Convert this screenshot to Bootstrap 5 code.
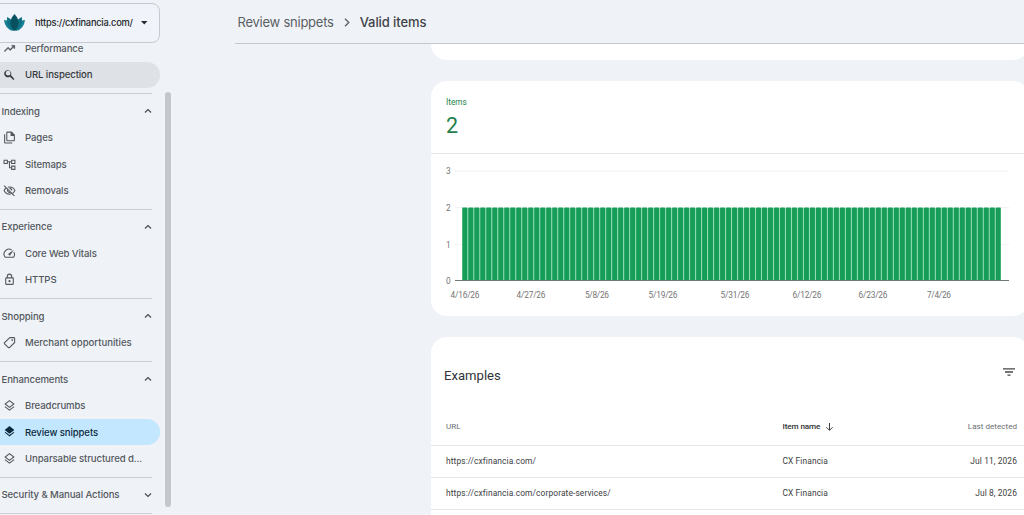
<!DOCTYPE html>
<html lang="en">
<head>
<meta charset="utf-8">
<title>Review snippets - Valid items</title>
<link href="https://cdn.jsdelivr.net/npm/bootstrap@5.3.0/dist/css/bootstrap.min.css" rel="stylesheet">
<style>
html,body{height:515px;overflow:hidden}
body{background:#eff3f8;font-family:Roboto,"Liberation Sans",sans-serif;font-size:8.2px;line-height:1;color:#3c4043}
svg{display:block;flex:none}
.gsans{font-family:Inter,"Liberation Sans",sans-serif}
.side{width:171px;height:515px;position:relative}
.picker{position:absolute;left:-8px;top:3px;width:168px;height:40px;border:1px solid #c6c9cf;border-radius:8px;background:#f0f3f9;font-size:9.3px;letter-spacing:-.25px;font-weight:500;color:#25282c;padding-left:11px;z-index:2}
.ptext{margin-left:10px;width:99px;white-space:nowrap}
.menu{padding-top:35px;width:160px;font-size:9.6px;letter-spacing:-.11px;font-weight:500;color:#54585d}
.item{height:26.5px;padding-left:2.5px;gap:9.5px;border-radius:0 14px 14px 0;white-space:nowrap}
.item span,.head span{padding-top:.8px}
.item svg,.picker svg{fill:currentColor}
.item svg{width:13px;height:13px}
.item.hov{background:#dee1e6;color:#35383c}
.item.sel{background:#c2e7ff;color:#0d2a3d}
.group{border-top:1px solid #cacdd2;width:152px;margin-top:5.3px;padding-top:3.5px}
.group .item{width:160px}
.head{height:26.5px;padding:0 0 0 1.5px}
.head svg{width:8px;height:8px;fill:none;stroke:#484c50;stroke-width:1.2}
.thumb{position:absolute;left:165px;top:92px;width:5.5px;height:415px;border-radius:3px;background:#c5c6c9}
.main{margin-left:64px;height:515px;overflow:hidden}
.crumbs{height:44px;border-bottom:1px solid #c4c7cc;font-size:13px;letter-spacing:-.24px;color:#5b5f63;padding:2px 0 0 2.5px}
.crumbs svg{margin:0 9.5px 0 10.5px}
.crumbs .here{font-weight:500;letter-spacing:-.1px;color:#3f4347}
.panel{background:#fff;border-radius:16px;margin-left:196px;width:598px}
.green{color:#24804c}
.cardhead{height:73px;border-bottom:1px solid #e3e5e8;padding:17px 15px 0}
.big{font-size:21.5px;margin-top:8.5px}
.chart{font-family:Roboto,sans-serif;font-size:8.3px;fill:#757575}
.chart-panel{margin-top:21px;height:235px}
.examples{margin-top:21px}
.exhead{height:71px;padding:6px 14px 0 13px;font-size:13.1px;color:#303336}
.exhead svg{margin-top:-7px}
.cell{height:32px;border-bottom:1px solid #e4e6ea;padding:0 12px 0 15px;font-size:8.4px;letter-spacing:.11px}
.cell .c1{width:336.5px}
.cell.hd{height:38px;color:#6b6f73;font-size:8.1px;letter-spacing:0}
.nm{font-weight:500;letter-spacing:-.1px;color:#303336}
</style>
</head>
<body>
<div class="d-flex">
<aside class="side gsans flex-shrink-0">
 <div class="picker d-flex align-items-center">
  <svg width="21" height="18" viewBox="0 0 21 18"><path fill="#177f94" d="M0 6Q4 6 6 9Q8 13 9 17Q1 15 0 6ZM21 6Q17 6 15 9Q13 13 12 17Q20 15 21 6Z"/><path fill="#0e7183" d="M3 3Q8 5 10 10V17Q2 13 3 3ZM18 3Q13 5 11 10V17Q19 13 18 3Z"/><path fill="#07505f" d="M10.5 0Q15 5 14.5 10Q14 14 10.5 17Q7 14 6.5 10Q6 5 10.5 0Z"/></svg>
  <span class="ptext">https://cxfinancia.com/</span>
  <svg width="7" height="4" viewBox="0 0 7 4" style="margin-left:7px"><path d="M0 0h6.500L3.250 3.500z"/></svg>
 </div>
 <nav class="menu">
  <div class="item d-flex align-items-center"><svg viewBox="0 0 24 24"><path d="M3.400 18 2 16.600l7.400-7.450 4 4L18.600 8H16V6h6v6h-2V9.400L13.400 16l-4-4z" stroke="currentColor" stroke-width=".5"/></svg><span>Performance</span></div>
  <div class="item hov d-flex align-items-center"><svg viewBox="0 0 24 24"><path d="M15.500 14h-.79l-.28-.27A6.500 6.500 0 1 0 13 15.500l.27.280v.79L19.500 22 21 20.500zM9.500 14a4.500 4.500 0 1 1 0-9 4.500 4.500 0 0 1 0 9z"/></svg><span>URL inspection</span></div>
  <div class="group">
   <div class="head d-flex align-items-center justify-content-between"><span>Indexing</span><svg viewBox="0 0 8 8"><path d="M1 5.500 4 2.500l3 3"/></svg></div>
   <div class="item d-flex align-items-center"><svg viewBox="0 0 24 24"><path d="M16 1H8a2 2 0 0 0-2 2v14a2 2 0 0 0 2 2h12a2 2 0 0 0 2-2V7zm4 16H8V3h6v6h6zM2 6h2v15h13v2H4a2 2 0 0 1-2-2z"/></svg><span>Pages</span></div>
   <div class="item d-flex align-items-center"><svg viewBox="0 0 24 24" style="fill:none;stroke:currentColor;stroke-width:2"><path d="M2 4h6v6H2zM16 4h6v6h-6zM16 15h6v6h-6zM8 7h8M12 7v11h4"/></svg><span>Sitemaps</span></div>
   <div class="item d-flex align-items-center"><svg viewBox="0 0 24 24" style="fill:none;stroke:currentColor;stroke-width:2"><path d="M2 3 21 22M9 6Q18 3.500 22 12Q20.500 15 18 17M6 7.500Q3.500 9 2 12Q6.500 21 15.500 18M8.500 10.500a4 4 0 0 0 5 5M12 8a4 4 0 0 1 4 4"/></svg><span>Removals</span></div>
  </div>
  <div class="group">
   <div class="head d-flex align-items-center justify-content-between"><span>Experience</span><svg viewBox="0 0 8 8"><path d="M1 5.500 4 2.500l3 3"/></svg></div>
   <div class="item d-flex align-items-center"><svg viewBox="0 0 24 24" style="fill:none;stroke:currentColor;stroke-width:2"><path d="M16 5.500A9 9 0 0 0 4.300 19H19.700A9 9 0 0 0 20 9.500"/><path fill="currentColor" stroke="none" d="M20 5 13.500 15a2 2 0 0 1-3-3z"/></svg><span>Core Web Vitals</span></div>
   <div class="item d-flex align-items-center"><svg viewBox="0 0 24 24"><path d="M18 8h-1V6A5 5 0 0 0 7 6v2H6a2 2 0 0 0-2 2v10a2 2 0 0 0 2 2h12a2 2 0 0 0 2-2V10a2 2 0 0 0-2-2zM9 6a3 3 0 0 1 6 0v2H9zm9 14H6V10h12zm-6-3a2 2 0 1 0 0-4 2 2 0 0 0 0 4z"/></svg><span>HTTPS</span></div>
  </div>
  <div class="group">
   <div class="head d-flex align-items-center justify-content-between"><span>Shopping</span><svg viewBox="0 0 8 8"><path d="M1 5.500 4 2.500l3 3"/></svg></div>
   <div class="item d-flex align-items-center"><svg viewBox="0 0 24 24" style="fill:none;stroke:currentColor;stroke-width:2;stroke-linejoin:round"><path d="M12.500 3H20.500L21.500 4V12L12 21.500H10L2.500 14V12.500Z"/><circle cx="17" cy="7.500" r=".7"/></svg><span style="letter-spacing:-.03px">Merchant opportunities</span></div>
  </div>
  <div class="group">
   <div class="head d-flex align-items-center justify-content-between"><span>Enhancements</span><svg viewBox="0 0 8 8"><path d="M1 5.500 4 2.500l3 3"/></svg></div>
   <div class="item d-flex align-items-center"><svg viewBox="0 0 24 24" style="fill:none;stroke:currentColor;stroke-width:2"><path d="M12 3 20 9.200 12 15.500 4 9.200ZM3.500 14 12 20.500 20.500 14"/></svg><span>Breadcrumbs</span></div>
   <div class="item sel d-flex align-items-center"><svg viewBox="0 0 24 24"><path d="m12 18.500-7.400-5.700L3 14l9 7 9-7-1.600-1.200zM12 16l9-7-9-7-9 7z"/></svg><span>Review snippets</span></div>
   <div class="item d-flex align-items-center"><svg viewBox="0 0 24 24" style="fill:none;stroke:currentColor;stroke-width:2"><path d="M12 3 20 9.200 12 15.500 4 9.200ZM3.500 14 12 20.500 20.500 14"/></svg><span>Unparsable structured d...</span></div>
  </div>
  <div class="group">
   <div class="head d-flex align-items-center justify-content-between"><span>Security &amp; Manual Actions</span><svg viewBox="0 0 8 8"><path d="M1 2.500 4 5.500l3-3"/></svg></div>
  </div>
  <div class="group"></div>
 </nav>
 <div class="thumb"></div>
</aside>
<main class="main flex-grow-1">
 <div class="crumbs gsans d-flex align-items-center"><span>Review snippets</span><svg width="6" height="9" viewBox="0 0 6 9" fill="none" stroke="#5b5f63" stroke-width="1.300"><path d="M1 .8 4.800 4.500 1 8.200"/></svg><span class="here">Valid items</span></div>
 <section class="panel rounded-top-0" style="height:16px"></section>
 <section class="panel chart-panel">
  <div class="cardhead green"><div>Items</div><div class="big">2</div></div>
  <svg class="chart" id="chart" width="593" height="161" viewBox="431 154 593 161"></svg>
 </section>
 <section class="panel examples">
  <div class="exhead d-flex justify-content-between align-items-center"><span>Examples</span><svg width="12" height="8" viewBox="0 0 12 8" fill="none" stroke="#44474a" stroke-width="1.300"><path d="M0 .8h12M2 4h8M4.500 7.200h3"/></svg></div>
  <div class="cell hd d-flex align-items-center"><span class="c1">URL</span><span class="nm">Item name</span><svg style="margin-left:6px" width="7" height="8" viewBox="0 0 7 8" fill="none" stroke="#3c4043"><path d="M3.500 0v7.300M.4 4.200l3.100 3.100 3.100-3.100"/></svg><span class="ms-auto">Last detected</span></div>
  <div class="cell d-flex align-items-center"><span class="c1">https://cxfinancia.com/</span><span>CX Financia</span><span class="ms-auto">Jul 11, 2026</span></div>
  <div class="cell d-flex align-items-center"><span class="c1">https://cxfinancia.com/corporate-services/</span><span>CX Financia</span><span class="ms-auto">Jul 8, 2026</span></div>
  <div class="cell"></div>
 </section>
</main>
</div>
<script>
const s=[];
// horizontal gridlines with their axis values
[[171,3],[207.500,2],[244.500,1]].forEach(([y,v])=>s.push(`<path d="M455 ${y}H1009" stroke="#f0f2f4"/><text x="446" y="${y+3}">${v}</text>`));
s.push('<text x="446" y="284">0</text>');
// one bar per day
s.push('<rect x="462.500" y="208" width="538" height="72.500" fill="#8fdcb3"/>');
for(let i=0;i<90;i++)s.push(`<rect x="${462.300+i*5.995}" y="207.500" width="4.900" height="73" rx=".5" fill="#189d58"/>`);
s.push('<path d="M455 280.500H1009" stroke="#6f7773"/>');
[[0,'4/16/26'],[11,'4/27/26'],[22,'5/8/26'],[33,'5/19/26'],[45,'5/31/26'],[57,'6/12/26'],[68,'6/23/26'],[79,'7/4/26']].forEach(([i,t])=>s.push(`<text x="${465+i*6}" y="297.500" text-anchor="middle" textLength="${t.length>6?29:24}">${t}</text>`));
document.getElementById('chart').innerHTML=s.join('');
</script>
<script src="https://cdn.jsdelivr.net/npm/bootstrap@5.3.0/dist/js/bootstrap.bundle.min.js"></script>
</body>
</html>
